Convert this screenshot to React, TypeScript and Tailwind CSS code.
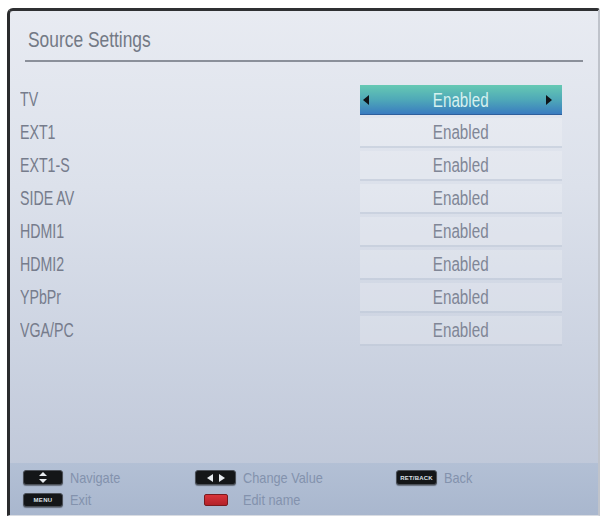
import React from "react";

const rows = ["TV", "EXT1", "EXT1-S", "SIDE AV", "HDMI1", "HDMI2", "YPbPr", "VGA/PC"];

function Key({ children, className = "" }: { children?: React.ReactNode; className?: string }) {
  return (
    <div
      className={
        "flex items-center justify-center rounded-[3px] bg-[#141618] border border-[#4a4f57] shadow-[0_1px_1px_rgba(0,0,0,0.4)] " +
        className
      }
    >
      {children}
    </div>
  );
}

export default function App() {
  const font = { fontFamily: '"Liberation Sans", Arial, sans-serif' };
  return (
    <div className="w-[603px] h-[520px] bg-white pt-[8px] pl-[7px]" style={font}>
      <div className="w-[593px] h-[508px] flex flex-col rounded-tl-[6px] rounded-tr-[3px] border-l-[3px] border-t-[3px] border-l-[#2a2b2d] border-t-[#2f3033] border-r-2 border-r-[#bfc3cb] border-b border-b-[#d9dce2] bg-[linear-gradient(180deg,#e8ebf2_0%,#dce1eb_35%,#cdd4e2_65%,#bbc4d6_100%)] overflow-hidden">
        {/* Title */}
        <div className="pt-[15px] pl-[18px] h-[49px]">
          <span className="inline-block text-[22px] leading-[27px] text-[#737985] scale-x-[0.79] origin-left whitespace-nowrap">
            Source Settings
          </span>
        </div>
        <div className="ml-[15px] w-[558px] h-[2px] bg-[#8b909a]" />

        {/* Rows */}
        <div className="mt-[23px] flex flex-col gap-[3px]">
          {rows.map((r, i) => (
            <div key={r} className="flex items-center h-[30px]">
              <div className="pl-[10px] w-[350px]">
                <span className="inline-block text-[20px] leading-[22px] text-[#767c8c] scale-x-[0.71] origin-left whitespace-nowrap">
                  {r}
                </span>
              </div>
              {i === 0 ? (
                <div className="relative w-[202px] h-[30px] flex items-center justify-center bg-[linear-gradient(180deg,#66c9b3_0%,#4fa9b8_50%,#3a7cc0_100%)] border-b border-b-[#2e5f9c]">
                  <svg className="absolute left-[3px] top-[10px]" width="6" height="10" viewBox="0 0 6 10">
                    <path d="M6 0 L0 5 L6 10 Z" fill="#101418" />
                  </svg>
                  <span className="inline-block text-[20px] leading-[22px] text-[#d6f1ef] scale-x-[0.76] whitespace-nowrap">
                    Enabled
                  </span>
                  <svg className="absolute right-[10px] top-[10px]" width="6" height="10" viewBox="0 0 6 10">
                    <path d="M0 0 L6 5 L0 10 Z" fill="#101418" />
                  </svg>
                </div>
              ) : (
                <div className="w-[202px] h-[30px] flex items-center justify-center bg-white/20 border-b-2 border-b-[#a9b6ca]/40">
                  <span className="inline-block text-[20px] leading-[22px] text-[#808696] scale-x-[0.76] whitespace-nowrap">
                    Enabled
                  </span>
                </div>
              )}
            </div>
          ))}
        </div>

        <div className="flex-1" />

        {/* Footer */}
        <div className="h-[52px] bg-[linear-gradient(180deg,#b3c0d5_0%,#a9b7ce_100%)] pt-[7px] pl-[13px] flex flex-col gap-[7px]">
          <div className="flex items-center h-[15px]">
            <div className="w-[172px] flex items-center">
              <div className="w-[40px] flex justify-center">
                <Key className="w-[40px] h-[15px]">
                  <svg width="8" height="11" viewBox="0 0 8 11">
                    <path d="M4 0 L8 4 L0 4 Z" fill="#e8ecf0" />
                    <path d="M4 11 L8 7 L0 7 Z" fill="#e8ecf0" />
                  </svg>
                </Key>
              </div>
              <span className="ml-[7px] inline-block text-[15px] leading-[16px] text-[#8392ad] scale-x-[0.85] origin-left whitespace-nowrap">
                Navigate
              </span>
            </div>
            <div className="w-[201px] flex items-center">
              <div className="w-[41px] flex justify-center">
                <Key className="w-[41px] h-[15px] gap-[6px]">
                  <svg width="6" height="8" viewBox="0 0 6 8">
                    <path d="M6 0 L0 4 L6 8 Z" fill="#e8ecf0" />
                  </svg>
                  <svg width="6" height="8" viewBox="0 0 6 8">
                    <path d="M0 0 L6 4 L0 8 Z" fill="#e8ecf0" />
                  </svg>
                </Key>
              </div>
              <span className="ml-[7px] inline-block text-[15px] leading-[16px] text-[#8392ad] scale-x-[0.85] origin-left whitespace-nowrap">
                Change Value
              </span>
            </div>
            <div className="flex items-center">
              <div className="w-[41px] flex justify-center">
                <Key className="w-[41px] h-[15px]">
                  <span className="text-[6px] leading-[6px] font-bold text-[#dfe3e8] tracking-[0.2px]">RET/BACK</span>
                </Key>
              </div>
              <span className="ml-[7px] inline-block text-[15px] leading-[16px] text-[#8392ad] scale-x-[0.85] origin-left whitespace-nowrap">
                Back
              </span>
            </div>
          </div>
          <div className="flex items-center h-[15px]">
            <div className="w-[172px] flex items-center">
              <div className="w-[40px] flex justify-center">
                <Key className="w-[40px] h-[14px]">
                  <span className="text-[6px] leading-[6px] font-bold text-[#dfe3e8] tracking-[0.3px]">MENU</span>
                </Key>
              </div>
              <span className="ml-[7px] inline-block text-[15px] leading-[16px] text-[#8392ad] scale-x-[0.85] origin-left whitespace-nowrap">
                Exit
              </span>
            </div>
            <div className="w-[201px] flex items-center">
              <div className="w-[41px] flex justify-center">
                <div className="w-[24px] h-[12px] rounded-[2px] bg-[linear-gradient(180deg,#d8343a_0%,#b3222a_100%)] border border-[#7a1a1e]" />
              </div>
              <span className="ml-[7px] inline-block text-[15px] leading-[16px] text-[#8392ad] scale-x-[0.85] origin-left whitespace-nowrap">
                Edit name
              </span>
            </div>
          </div>
        </div>
      </div>
    </div>
  );
}
